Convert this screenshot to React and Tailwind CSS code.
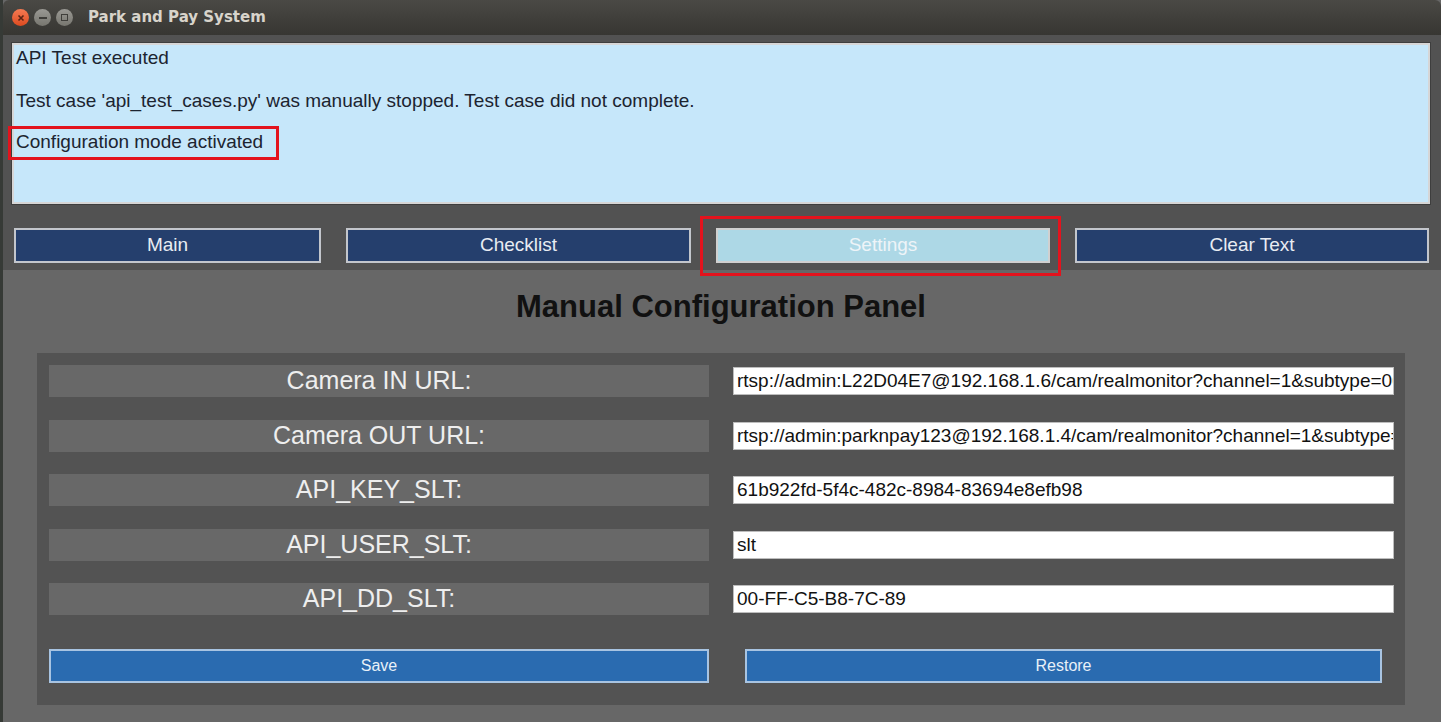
import React from "react";

const rows = [
  ["Camera IN URL:", "rtsp://admin:L22D04E7@192.168.1.6/cam/realmonitor?channel=1&subtype=00"],
  ["Camera OUT URL:", "rtsp://admin:parknpay123@192.168.1.4/cam/realmonitor?channel=1&subtype=0"],
  ["API_KEY_SLT:", "61b922fd-5f4c-482c-8984-83694e8efb98"],
  ["API_USER_SLT:", "slt"],
  ["API_DD_SLT:", "00-FF-C5-B8-7C-89"],
];

function NavButton({ label, w, active }) {
  return (
    <div
      className={
        "h-[35px] flex items-center justify-center border-2 text-[19px] " +
        (active
          ? "bg-[#add8e6] border-[#d0d0d0] text-[#eef4f8]"
          : "bg-[#253f6d] border-[#c3c6cc] text-[#e8ecf2]")
      }
      style={{ width: w }}
    >
      {label}
    </div>
  );
}

export default function App() {
  return (
    <div
      className="w-[1441px] h-[722px] overflow-hidden flex bg-[#676767]"
      style={{ fontFamily: '"Liberation Sans", Arial, sans-serif' }}
    >
      <div className="w-[3px] bg-[#363a36] shrink-0" />
      <div className="flex-1 flex flex-col">
        {/* Title bar */}
        <div className="h-[35px] shrink-0 flex items-center bg-gradient-to-b from-[#4a4945] to-[#373632] rounded-t-[6px]">
          <div className="flex items-center gap-[5px] ml-[9px]">
            <div className="w-[17px] h-[17px] rounded-full bg-gradient-to-b from-[#f57a52] to-[#dd4a1e] flex items-center justify-center">
              <svg width="8" height="8" viewBox="0 0 8 8">
                <path d="M1.5 1.5 L6.5 6.5 M6.5 1.5 L1.5 6.5" stroke="#5a2414" strokeWidth="1.6" />
              </svg>
            </div>
            <div className="w-[17px] h-[17px] rounded-full bg-gradient-to-b from-[#9a9994] to-[#77766f] flex items-center justify-center">
              <div className="w-[8px] h-[2px] bg-[#3f3e3a]" />
            </div>
            <div className="w-[17px] h-[17px] rounded-full bg-gradient-to-b from-[#9a9994] to-[#77766f] flex items-center justify-center">
              <div className="w-[7px] h-[7px] border border-[#3f3e3a]" />
            </div>
          </div>
          <div
            className="ml-[15px] text-[15px] font-bold text-[#d8d4cb]"
            style={{ fontFamily: '"DejaVu Sans", sans-serif' }}
          >
            Park and Pay System
          </div>
        </div>

        {/* Top section */}
        <div className="bg-[#525252] pt-[8px] pb-[7px] shrink-0">
          <div className="relative ml-[9px] w-[1418px] h-[161px] bg-[#c6e7fa] border-2 border-[#d6d6d6] outline outline-1 outline-[#3e3e3e] text-[19px] text-[#1c2430] pl-[2px] pt-[2px]">
            <div className="h-[22px] leading-[22px]">API Test executed</div>
            <div className="h-[22px] leading-[22px] mt-[21px]">
              Test case 'api_test_cases.py' was manually stopped. Test case did not complete.
            </div>
            <div className="h-[22px] leading-[22px] mt-[19px]">Configuration mode activated</div>
            <div className="absolute left-[-6px] top-[81px] w-[271px] h-[34px] border-[3px] border-[#e3131d]" />
          </div>
          <div className="relative flex gap-[25px] ml-[11px] mt-[24px]">
            <NavButton label="Main" w={307} />
            <NavButton label="Checklist" w={345} />
            <NavButton label="Settings" w={334} active />
            <NavButton label="Clear Text" w={354} />
            <div className="absolute left-[686px] top-[-12px] w-[361px] h-[60px] border-[3px] border-[#e3131d]" />
          </div>
        </div>

        {/* Header */}
        <div className="h-[83px] shrink-0 pt-[18px] text-center">
          <div className="text-[31px] leading-[38px] font-bold text-[#111111] ml-[-2px]">
            Manual Configuration Panel
          </div>
        </div>

        {/* Panel */}
        <div className="ml-[34px] w-[1368px] h-[352px] bg-[#535353] pt-[12px] pl-[12px] flex flex-col">
          {rows.map(([label, value], i) => (
            <div key={i} className={"flex items-center h-[32px] " + (i > 0 ? "mt-[22.5px]" : "")}>
              <div className="w-[660px] h-[32px] bg-[#686868] text-[25px] text-[#eeeeee] flex items-center justify-center">
                {label}
              </div>
              <div className="ml-[24px] w-[661px] h-[28px] bg-white border border-[#bdbdbd] text-[19px] text-[#111] pl-[3px] overflow-hidden whitespace-nowrap leading-[26px]">
                {value}
              </div>
            </div>
          ))}
          <div className="flex mt-[34px]">
            <div className="w-[660px] h-[34px] bg-[#2a6bb0] border-2 border-[#a8c4e2] text-[16px] text-[#e8f0f8] flex items-center justify-center">
              Save
            </div>
            <div className="ml-[36px] w-[637px] h-[34px] bg-[#2a6bb0] border-2 border-[#a8c4e2] text-[16px] text-[#e8f0f8] flex items-center justify-center">
              Restore
            </div>
          </div>
        </div>
      </div>
    </div>
  );
}
